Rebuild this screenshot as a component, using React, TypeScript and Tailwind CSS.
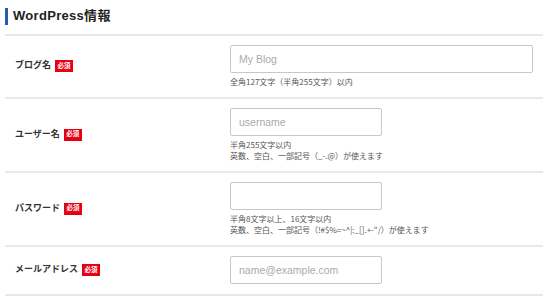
import React from "react";

const FONT = { fontFamily: '"Liberation Sans", "Noto Sans CJK JP", sans-serif' };

function Badge() {
  return (
    <span className="ml-[4px] inline-flex h-[12px] w-[18px] items-center justify-center bg-[#e60012] text-[6.5px] font-bold leading-none text-white">
      必須
    </span>
  );
}

function Row({
  label,
  placeholder,
  wide,
  helper,
  type = "text",
}: {
  label: string;
  placeholder?: string;
  wide?: boolean;
  helper?: string[];
  type?: string;
}) {
  return (
    <div className="flex items-center border-b-2 border-[#e8e8e8] pt-[9px] pb-[10px]">
      <div className="flex w-[225px] items-center pl-[10px]">
        <span className="text-[9px] font-bold text-[#333]">{label}</span>
        <Badge />
      </div>
      <div className="flex flex-col">
        <input
          type={type}
          placeholder={placeholder}
          className={`${wide ? "w-[303px]" : "w-[152px]"} h-[28px] rounded-[2px] border border-[#c8c8c8] bg-white px-[8px] text-[10.5px] text-[#333] outline-none placeholder:text-[#aaa]`}
        />
        {helper && (
          <div
            className="mt-[3px] text-[8px] leading-[11px] text-[#555]"
            style={{ fontFamily: '"Noto Sans CJK JP", sans-serif' }}
          >
            {helper.map((h, i) => (
              <div key={i} className="whitespace-nowrap">{h}</div>
            ))}
          </div>
        )}
      </div>
    </div>
  );
}

export default function App() {
  return (
    <div className="h-[306px] w-[546px] overflow-hidden bg-white" style={FONT}>
      <div className="ml-[5px] w-[538px]">
        <div className="flex h-[36px] items-center border-b-2 border-[#e8e8e8] pb-[2px]">
          <div className="h-[17px] w-[3px] bg-[#2b5ca8]" />
          <h2 className="ml-[5px] text-[13px] font-bold tracking-[0.3px] text-[#222]">WordPress情報</h2>
        </div>
        <Row label="ブログ名" placeholder="My Blog" wide helper={["全角127文字（半角255文字）以内"]} />
        <Row
          label="ユーザー名"
          placeholder="username"
          helper={["半角255文字以内", "英数、空白、一部記号（_-.@）が使えます"]}
        />
        <Row
          label="パスワード"
          type="password"
          helper={["半角8文字以上、16文字以内", "英数、空白、一部記号（!#$%=~^|:_[].+-\"/）が使えます"]}
        />
        <Row label="メールアドレス" placeholder="name@example.com" />
      </div>
    </div>
  );
}
